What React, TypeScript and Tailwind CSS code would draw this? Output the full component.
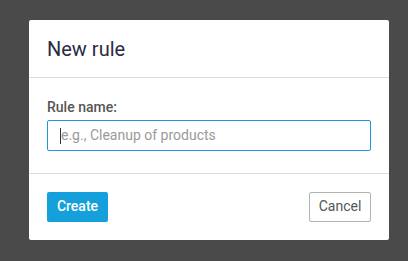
export default function App() {
  return (
    <div
      className="w-[408px] h-[261px] bg-[#4a4a4a] pt-[20px] pl-[29px]"
      style={{ fontFamily: "Roboto, 'Liberation Sans', sans-serif" }}
    >
      <div className="w-[360px] h-[220px] bg-white rounded-[2px] flex flex-col">
        <div className="h-[58px] border-b border-[#dcdcdc] px-[18px] flex items-center">
          <h1 className="text-[20px] leading-[24px] text-[#2a2b45] pt-[1px]">New rule</h1>
        </div>
        <div className="h-[96px] border-b border-[#dcdcdc] px-[18px] pt-[19px]">
          <label className="block text-[14px] leading-[20px] font-medium text-[#555] mb-[3px]">Rule name:</label>
          <div className="h-[31px] w-[324px] border border-[#1a9bd7] rounded-[2px] flex items-center pl-[12px]">
            <span className="w-[1px] h-[16px] bg-[#333]"></span>
            <span className="text-[14px] text-[#9a9a9a]">e.g., Cleanup of products</span>
          </div>
        </div>
        <div className="flex-1 px-[18px] flex items-center justify-between pb-[1px]">
          <button className="h-[30px] w-[61px] bg-[#159fdb] rounded-[2px] text-white text-[14px] font-medium">
            Create
          </button>
          <button className="h-[30px] w-[62px] bg-white border border-[#b3b3b3] rounded-[2px] text-[#555] text-[14px]">
            Cancel
          </button>
        </div>
      </div>
    </div>
  );
}
